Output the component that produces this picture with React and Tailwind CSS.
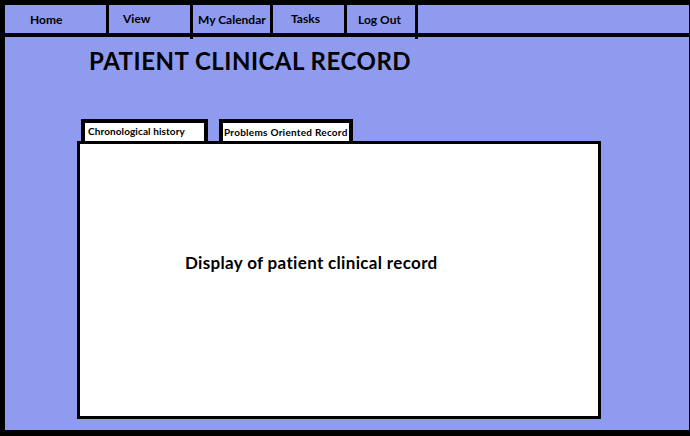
const navItems = [
  { label: 'Home', w: 'w-[101px]', pad: 'pl-[25px] pt-[9px]' },
  { label: 'View', w: 'w-[81px]', pad: 'pl-[14px] pt-[8px]', long: true },
  { label: 'My Calendar', w: 'w-[77px]', pad: 'pl-[5px] pt-[9px]' },
  { label: 'Tasks', w: 'w-[71px]', pad: 'pl-[18px] pt-[8px]' },
  { label: 'Log Out', w: 'w-[68px]', pad: 'pl-[11px] pt-[9px]', long: true },
]

export default function App() {
  return (
    <div
      className="h-[436px] w-[690px] bg-black pb-[6px] pl-[5px] pr-px pt-[5px] text-black"
      style={{ fontFamily: 'Lato, "Liberation Sans", sans-serif' }}
    >
      <div className="flex h-full flex-col bg-[#8f9bee]">
        <nav className="flex h-[32px] shrink-0 border-b-4 border-black">
          {navItems.map((item) => (
            <div key={item.label} className="flex">
              <div className={`${item.w} ${item.pad} text-[12px] font-bold leading-none`}>{item.label}</div>
              <div className={`relative z-10 w-[3px] bg-black ${item.long ? 'h-[34px]' : 'h-[28px]'}`} />
            </div>
          ))}
        </nav>

        <h1 className="ml-[84px] mt-[12px] text-[24px] font-bold leading-none tracking-[0.5px]">PATIENT CLINICAL RECORD</h1>

        <div className="ml-[76px] mt-[46px] flex gap-[11px]">
          <div className="h-[22px] w-[127px] border-x-4 border-t-4 border-black bg-white pl-[3px] pt-[3px] text-[10px] font-bold leading-none tracking-[0.1px]">
            Chronological history
          </div>
          <div className="h-[22px] w-[134px] border-x-4 border-t-4 border-black bg-white pl-px pt-[4px] text-[10px] font-bold leading-none tracking-[0.25px]">
            Problems Oriented Record
          </div>
        </div>

        <div className="mb-[11px] ml-[72px] h-[278px] w-[524px] border-[3px] border-black bg-white pl-[105px] pt-[110px]">
          <p className="text-[17px] font-bold leading-none tracking-[0.33px]">Display of patient clinical record</p>
        </div>
      </div>
    </div>
  )
}
